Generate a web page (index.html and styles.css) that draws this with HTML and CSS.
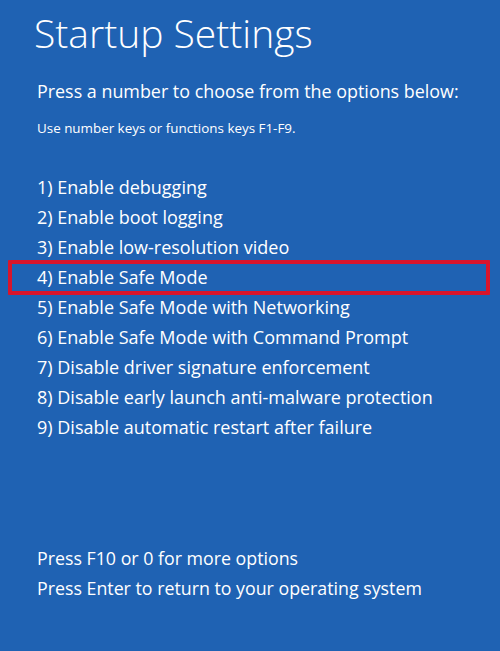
FILE: index.html
```html
<!DOCTYPE html>
<html>
  <head>
    <title>Startup Settings</title>
    <meta charset="UTF-8" />
    <link rel="stylesheet" href="styles.css">
  </head>
  <body>
    <div class="screen">
      <h1 class="title">Startup Settings</h1>
      <p class="lead">Press a number to choose from the options below:</p>
      <p class="hint">Use number keys or functions keys F1-F9.</p>

      <ul class="options">
        <li>1) Enable debugging</li>
        <li>2) Enable boot logging</li>
        <li>3) Enable low-resolution video</li>
        <li class="selected">4) Enable Safe Mode</li>
        <li>5) Enable Safe Mode with Networking</li>
        <li>6) Enable Safe Mode with Command Prompt</li>
        <li>7) Disable driver signature enforcement</li>
        <li>8) Disable early launch anti-malware protection</li>
        <li>9) Disable automatic restart after failure</li>
      </ul>

      <div class="footer">
        <p>Press F10 or 0 for more options</p>
        <p>Press Enter to return to your operating system</p>
      </div>
    </div>
  </body>
</html>
```

FILE: styles.css
```css
html, body {
  margin: 0;
  height: 100%;
}
body {
  background-color: #1f62b3;
  color: #ffffff;
  font-family: "Open Sans", "Noto Sans", sans-serif;
}
.screen {
  display: flex;
  flex-direction: column;
  height: 100%;
  padding-left: 37px;
  box-sizing: border-box;
}
.title {
  margin: 8px 0 0 -3px;
  font-size: 39px;
  font-weight: 300;
  line-height: 50px;
}
.lead {
  margin: 20px 0 0;
  font-size: 17.9px;
  line-height: 26px;
}
.hint {
  margin: 15px 0 0;
  font-size: 13.4px;
  line-height: 18px;
}
.options {
  list-style: none;
  margin: 35px 0 0;
  padding: 0;
  font-size: 18px;
}
.options li {
  line-height: 30px;
  height: 30px;
}
.options li.selected {
  position: relative;
}
.options li.selected::before {
  content: "";
  position: absolute;
  top: -2px;
  bottom: -3px;
  left: -29px;
  right: 10px;
  border: 4px solid #d8152c;
  border-radius: 1px;
}
.footer {
  margin-top: 101px;
  font-size: 17.8px;
}
.footer p {
  margin: 0;
  line-height: 30px;
}
```
